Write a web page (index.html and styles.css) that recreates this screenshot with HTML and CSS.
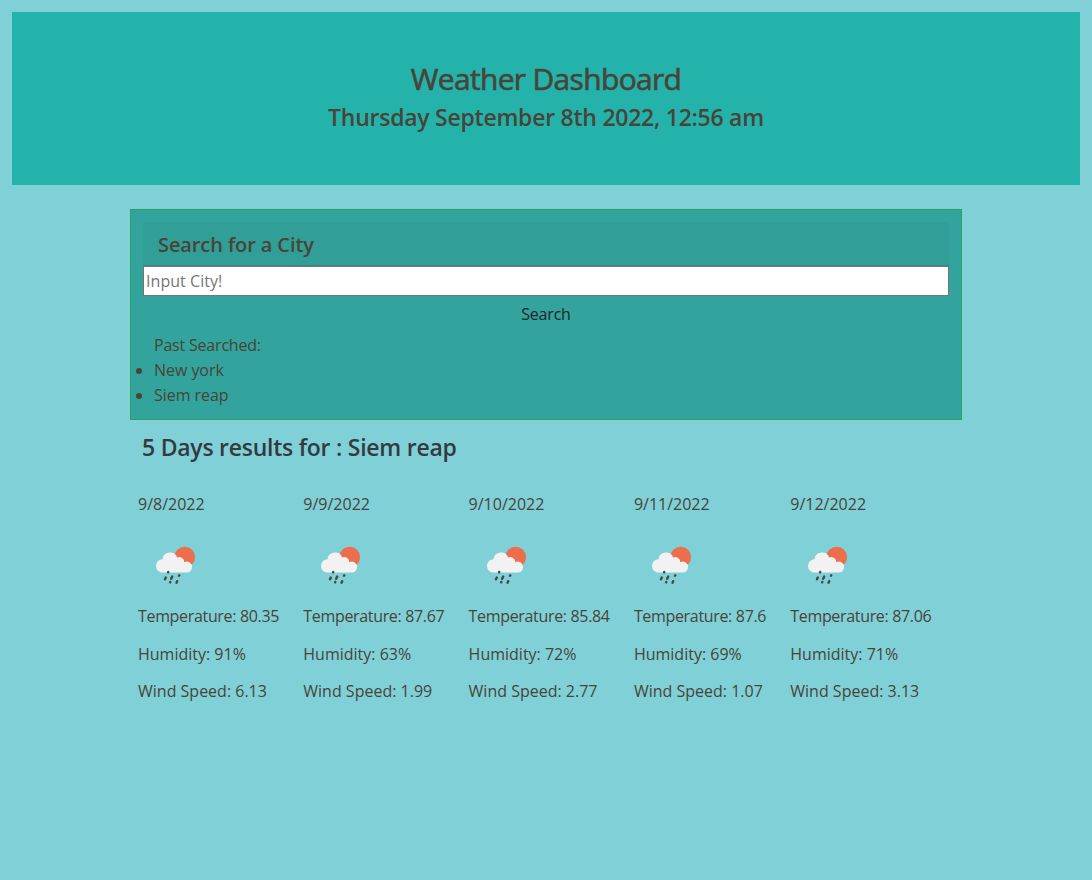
FILE: index.html
```
<!DOCTYPE html>
<html lang="en">
<head>
<meta charset="utf-8">
<title>Weather Dashboard</title>
<link rel="stylesheet" href="styles.css">
</head>
<body>
<svg class="sprite" aria-hidden="true">
  <symbol id="rain" viewBox="0 0 50 50">
    <circle cx="29.7" cy="17.2" r="10.4" fill="#ec6e4c"/>
    <path fill="#f2f2f2" d="M7.8 32.6a6.7 6.7 0 0 1-.3-13.4 7.6 7.6 0 0 1 14.7-1.6 5.1 5.1 0 0 1 7.2 4.6 5.3 5.3 0 0 1 7.7 5 5.4 5.4 0 0 1-5.3 5.4Z"/>
    <g stroke="#484848" stroke-width="2.4" stroke-linecap="round">
      <path d="m13.1 32.4.1-.4M10.800 37.500l-.8 1.800M17.200 36.600l-1 2.200M24.300 35.200l-.3.600M15.300 42l-.1.300M22.200 41.200l-.7 1.500"/>
    </g>
  </symbol>
</svg>
<header class="banner">
  <h1>Weather Dashboard</h1>
  <h2>Thursday September 8th 2022, 12:56 am</h2>
</header>
<main class="container">
  <section class="panel">
    <h3 class="panel-title">Search for a City</h3>
    <input class="city" type="text" placeholder="Input City!">
    <button class="search" type="button">Search</button>
    <div class="history">
      <div class="label">Past Searched:</div>
      <ul><li>New york</li><li>Siem reap</li></ul>
    </div>
  </section>
  <h2 class="results">5 Days results for : Siem reap</h2>
  <section class="days">
    <article><p>9/8/2022</p><svg class="icon"><use href="#rain"/></svg><p class="temp">Temperature: 80.35</p><p>Humidity: 91%</p><p>Wind Speed: 6.13</p></article>
    <article><p>9/9/2022</p><svg class="icon"><use href="#rain"/></svg><p class="temp">Temperature: 87.67</p><p>Humidity: 63%</p><p>Wind Speed: 1.99</p></article>
    <article><p>9/10/2022</p><svg class="icon"><use href="#rain"/></svg><p class="temp">Temperature: 85.84</p><p>Humidity: 72%</p><p>Wind Speed: 2.77</p></article>
    <article><p>9/11/2022</p><svg class="icon"><use href="#rain"/></svg><p class="temp">Temperature: 87.6</p><p>Humidity: 69%</p><p>Wind Speed: 1.07</p></article>
    <article><p>9/12/2022</p><svg class="icon"><use href="#rain"/></svg><p class="temp">Temperature: 87.06</p><p>Humidity: 71%</p><p>Wind Speed: 3.13</p></article>
  </section>
</main>
</body>
</html>
```
FILE: styles.css
```
* { box-sizing: border-box; }
body {
  margin: 0;
  padding: 12px;
  min-height: 880px;
  background: #80d0d7;
  color: #484438;
  font: 400 16px/25px "Segoe UI", "Open Sans", sans-serif;
}
h1, h2, h3, p, ul { margin: 0; }
.sprite { display: none; }
.banner {
  height: 173px;
  padding-top: 48px;
  background: #24b3ab;
  text-align: center;
}
.banner h1 {
  font-size: 30px;
  font-weight: 400;
  line-height: 38px;
  letter-spacing: -0.67px;
  -webkit-text-stroke: 0.6px currentColor;
}
.banner h2 { font-size: 23px; font-weight: 600; line-height: 38px; letter-spacing: -0.25px; }
.container { width: 832px; margin: 24px auto 0; }
.panel {
  display: flex;
  flex-direction: column;
  height: 211px;
  padding: 12px;
  border: 1px solid #2ba160;
  background: #33a39d;
}
.panel > * { flex-shrink: 0; }
.panel-title {
  height: 44px;
  padding: 0 15px;
  border-bottom: 1px solid #2b8f89;
  border-radius: 3px 3px 0 0;
  background: #319e98;
  font-size: 20px;
  font-weight: 600;
  line-height: 45px;
  letter-spacing: -0.1px;
}
.city {
  width: 100%;
  height: 30px;
  padding: 0 2px;
  border: 1px solid #767676;
  background: #fff;
  font: inherit;
  letter-spacing: 0.05px;
}
.city::placeholder { color: #757575; }
.search {
  height: 36px;
  padding: 0;
  border: 0;
  background: none;
  color: #212529;
  font: inherit;
  letter-spacing: -0.2px;
}
.history { padding: 1px 0 0 11px; }
.history .label { letter-spacing: -0.2px; }
.history ul { padding: 0; letter-spacing: -0.05px; }
.results {
  padding: 8px 12px 0;
  color: #343a40;
  font-size: 23px;
  font-weight: 600;
  line-height: 38px;
  letter-spacing: -0.25px;
}
.days {
  display: grid;
  grid-template-columns: 165.3px 165.3px 165.3px 156.4px 150px;
  padding: 26px 8px 0;
}
.days p { margin-bottom: 12.5px; }
.days .temp { letter-spacing: -0.33px; }
.icon { display: block; width: 50px; height: 50px; margin: 23px 0 14px 17px; }
```
